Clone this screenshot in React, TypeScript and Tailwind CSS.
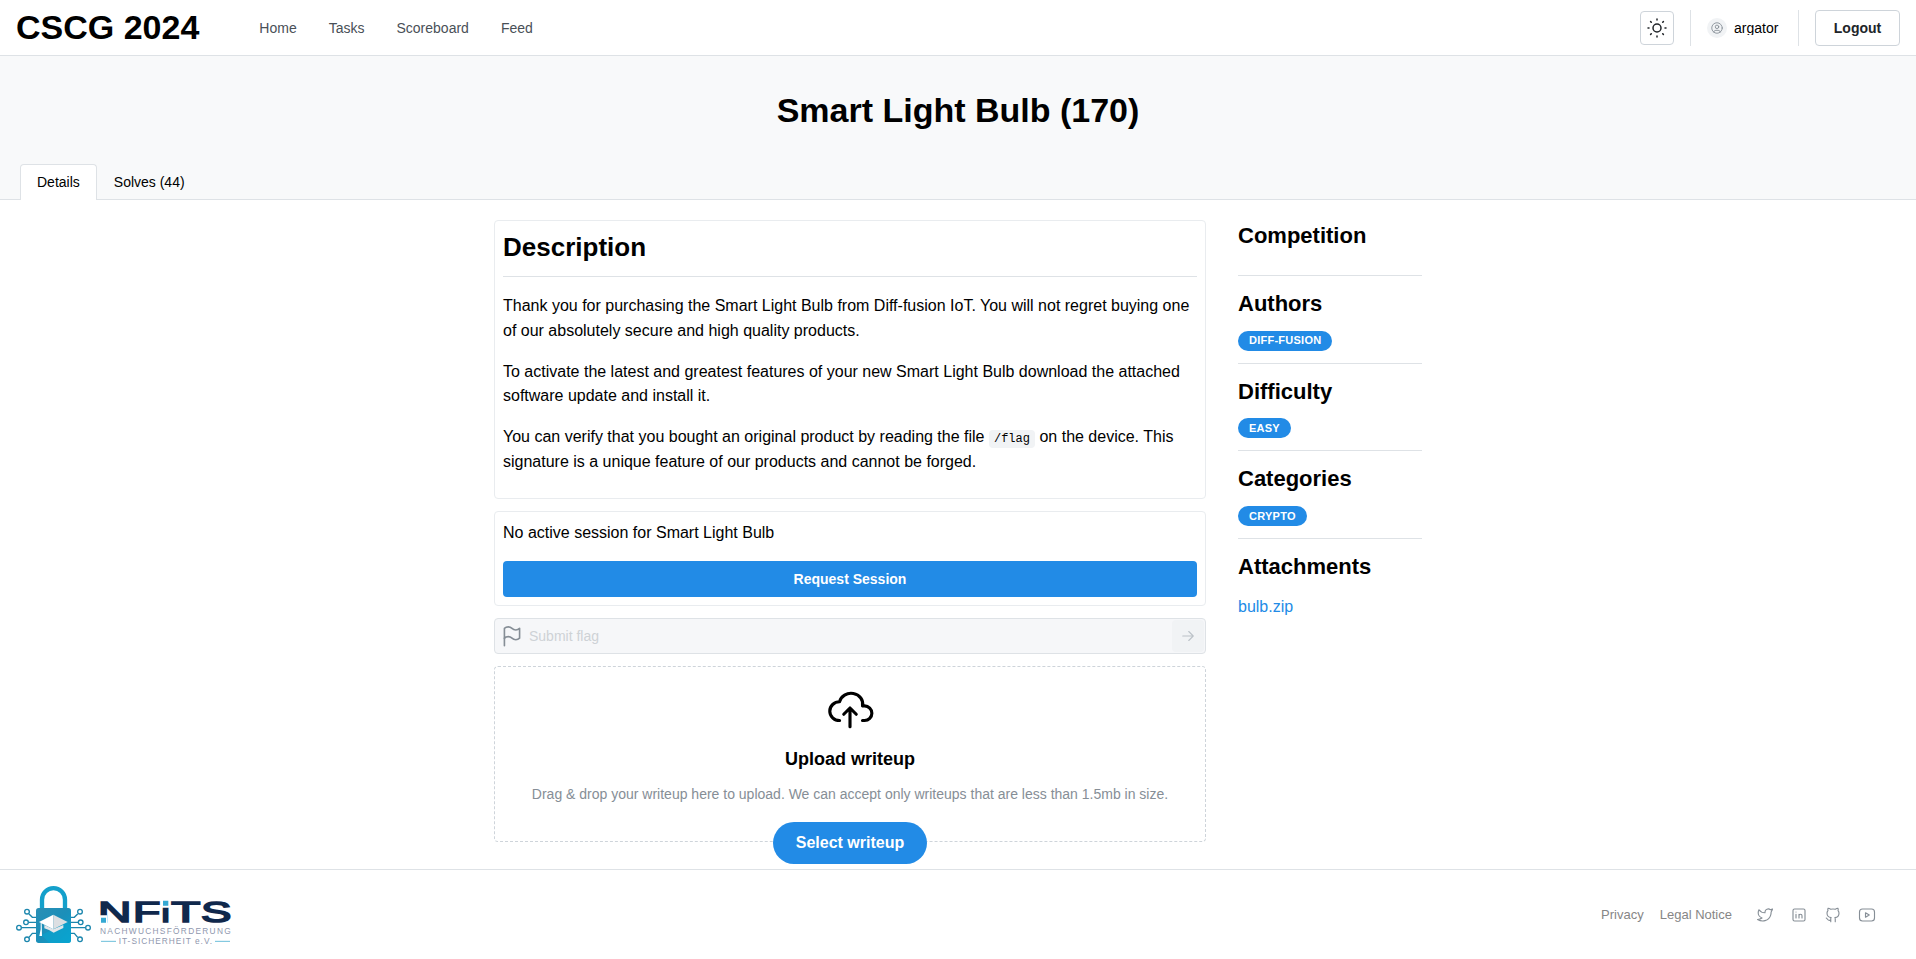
import type { ReactNode } from "react";

type IconProps = { size?: number; className?: string; children: ReactNode };

function Icon({ size = 24, className = "", children }: IconProps) {
  return (
    <svg
      width={size}
      height={size}
      viewBox="0 0 24 24"
      fill="none"
      stroke="currentColor"
      strokeWidth="1.5"
      strokeLinecap="round"
      strokeLinejoin="round"
      className={`shrink-0 ${className}`}
    >
      {children}
    </svg>
  );
}

const LOGO_FONT = "Liberation Sans, Arial, sans-serif";

function NfitsLogo() {
  return (
    <svg width="234" height="65" viewBox="36 51 702 195" fontFamily={LOGO_FONT}>
      <defs>
        <linearGradient id="body" x1="0" y1="0" x2="1" y2="1">
          <stop offset="0" stopColor="#2a8fb5" />
          <stop offset="0.5" stopColor="#1b8fb9" />
          <stop offset="1" stopColor="#0aa3cf" />
        </linearGradient>
      </defs>
      <path d="M126 132V104a34.500 34.500 0 0 1 69 0v28" fill="none" stroke="#14a0cb" strokeWidth="13" />
      <g fill="none" stroke="#1b86ad" strokeWidth="4">
        <path d="M87 147l10 10h12M86 172h22M65 188h43M87 217l10-12h12" />
        <path d="M233 147l-10 10h-12M234 172h-22M256 188h-43M233 217l-10-12h-12" />
        <g fill="#fff">
          <circle cx="81" cy="140" r="7" />
          <circle cx="78" cy="172" r="7" />
          <circle cx="57" cy="188" r="7" />
          <circle cx="81" cy="223" r="7" />
          <circle cx="240" cy="140" r="7" />
          <circle cx="242" cy="172" r="7" />
          <circle cx="264" cy="188" r="7" />
          <circle cx="240" cy="223" r="7" />
        </g>
      </g>
      <rect x="108" y="129" width="105" height="105" rx="8" fill="url(#body)" />
      <path d="M124 210l79-40 10 12v44q0 8-8 8h-57z" fill="#08a5d0" opacity="0.6" />
      <path d="M133 180l27 13 30-13v9q-13 6-29 14-14-9-28-13z" fill="#e3e6e9" />
      <path d="M117 171l43-22v44z" fill="#fff" />
      <path d="M160 149l43 22-43 22z" fill="#dcdfe2" />
      <path d="M122 173v20l-4 20h8l-1-40z" fill="#fff" />
      <g fill="#10284c" stroke="#10284c" strokeWidth="5" fontSize="90">
        <text x="294" y="171" textLength="100" lengthAdjust="spacingAndGlyphs">N</text>
        <text x="399" y="171" textLength="82" lengthAdjust="spacingAndGlyphs">F</text>
        <text x="481" y="171" textLength="32" lengthAdjust="spacingAndGlyphs">I</text>
        <text x="514" y="171" textLength="87" lengthAdjust="spacingAndGlyphs">T</text>
        <text x="603" y="171" textLength="91" lengthAdjust="spacingAndGlyphs">S</text>
      </g>
      <path d="M298 151h23v26h-23zM485 102h24v26h-24z" fill="#fff" />
      <path d="M303 158h15v15h-15zM489 107h16v15h-16z" fill="#35a9d3" />
      <g fill="#8f97ae" fontSize="25">
        <text x="300" y="208" textLength="392">NACHWUCHSFÖRDERUNG</text>
        <text x="356" y="237" textLength="280">IT-SICHERHEIT e.V.</text>
      </g>
      <path d="M303 229h45M645 229h45" stroke="#6cbfda" strokeWidth="3" />
    </svg>
  );
}

function Header() {
  return (
    <header className="flex h-14 items-center border-b border-[#dee2e6] bg-white px-4">
      <h1 className="pb-0.5 text-[34px] leading-[44px] font-bold">CSCG 2024</h1>
      <nav className="ml-[60px] flex gap-8 text-sm text-[#495057]">
        <a>Home</a>
        <a>Tasks</a>
        <a>Scoreboard</a>
        <a>Feed</a>
      </nav>
      <div className="ml-auto flex items-center gap-4">
        <button className="flex size-[34px] items-center justify-center rounded border border-[#ced4da] text-[#212529]">
          <Icon>
            <circle cx="12" cy="12" r="4" />
            <path d="M3 12h1m8 -9v1m8 8h1m-9 8v1m-6.400 -15.400l.7 .7m12.100 -.7l-.7 .7m0 11.400l.7 .7m-12.100 -.7l-.7 .7" />
          </Icon>
        </button>
        <div className="h-9 w-px bg-[#dee2e6]" />
        <div className="flex items-center gap-[7px]">
          <span className="flex size-5 items-center justify-center rounded-full bg-[#f1f3f5] text-[#868e96]">
            <Icon size={14}>
              <circle cx="12" cy="12" r="9" />
              <circle cx="12" cy="10" r="3" />
              <path d="M6.168 18.849a4 4 0 0 1 3.832 -2.849h4a4 4 0 0 1 3.834 2.855" />
            </Icon>
          </span>
          <span className="w-[48px] overflow-hidden text-sm leading-[14px]">argator</span>
        </div>
        <div className="h-9 w-px bg-[#dee2e6]" />
        <button className="h-9 w-[85px] rounded border border-[#ced4da] text-sm font-bold text-[#212529]">
          Logout
        </button>
      </div>
    </header>
  );
}

function Hero() {
  return (
    <section className="flex h-36 flex-col border-b border-[#dee2e6] bg-[#f8f9fa]">
      <h1 className="mt-8 text-center text-[34px] leading-[44px] font-bold">Smart Light Bulb (170)</h1>
      <div className="-mb-px mt-auto flex h-9 px-5 text-sm">
        <div className="flex items-center rounded-t border border-b-0 border-[#dee2e6] bg-white px-4 pb-px">Details</div>
        <div className="flex items-center px-[17px]">Solves (44)</div>
      </div>
    </section>
  );
}

function Badge({ children }: { children: ReactNode }) {
  return (
    <span className="flex h-5 w-fit items-center rounded-full bg-[#228be6] px-[11px] pb-[0.600px] text-[11px] leading-[18px] font-bold tracking-[0.25px] text-white uppercase">
      {children}
    </span>
  );
}

function SideTitle({ children }: { children: ReactNode }) {
  return <h3 className="mb-[11.700px] text-[22px] leading-[31px] font-bold">{children}</h3>;
}

function SideSection({ title, children }: { title: string; children?: ReactNode }) {
  return (
    <div className="border-b border-[#dee2e6] pb-3">
      <SideTitle>{title}</SideTitle>
      {children}
    </div>
  );
}

export default function App() {
  return (
    <div className="flex h-[959px] flex-col overflow-hidden bg-white font-['Liberation_Sans',Arial,sans-serif] text-base leading-[24.800px] text-black">
      <Header />
      <Hero />
      <main className="mx-auto flex h-[669px] w-[928px] shrink-0 gap-8 pt-5">
        <div className="flex w-[712px] flex-col gap-3">
          <article className="h-[279px] rounded border border-[#e9ecef] px-2 pt-[9px]">
            <h2 className="text-[26px] leading-[35px] font-bold">Description</h2>
            <hr className="mt-[11px] mb-[17px] border-[#dee2e6]" />
            <p className="mb-4">
              Thank you for purchasing the Smart Light Bulb from Diff-fusion IoT. You will not regret buying one of our
              absolutely secure and high quality products.
            </p>
            <p className="mb-4">
              To activate the latest and greatest features of your new Smart Light Bulb download the attached software
              update and install it.
            </p>
            <p>
              You can verify that you bought an original product by reading the file{" "}
              <code className="rounded bg-[#f1f3f5] px-[5px] py-0.5 font-['Liberation_Mono',monospace] text-xs">/flag</code>{" "}
              on the device. This signature is a unique feature of our products and cannot be forged.
            </p>
          </article>

          <section className="h-[95px] rounded border border-[#e9ecef] px-2 pt-[9px]">
            <p>No active session for Smart Light Bulb</p>
            <button className="mt-[15px] h-9 w-full rounded bg-[#228be6] text-sm font-bold text-white">
              Request Session
            </button>
          </section>

          <div className="flex h-9 items-center rounded border border-[#dee2e6] bg-[#f6f7f9] pr-px">
            <span className="flex w-[34px] justify-center text-[#868e96]">
              <Icon size={26}>
                <path d="M5 5a5 5 0 0 1 7 0a5 5 0 0 0 7 0v9a5 5 0 0 1 -7 0a5 5 0 0 0 -7 0v-9z" />
                <path d="M5 21v-7" />
              </Icon>
            </span>
            <span className="flex-1 text-sm text-[#ced2d6]">Submit flag</span>
            <button className="flex size-8 items-center justify-center rounded bg-[#f1f3f5] text-[#bcc2c8]">
              <Icon size={18}>
                <path d="M5 12h14M13 18l6 -6M13 6l6 6" />
              </Icon>
            </button>
          </div>

          <section className="relative flex h-[176px] flex-col items-center rounded border border-dashed border-[#ced4da] pt-4">
            <Icon size={50}>
              <path d="M7 18a4.600 4.400 0 0 1 0 -9a5 4.500 0 0 1 11 2h1a3.500 3.500 0 0 1 0 7h-1" />
              <path d="M9 15l3 -3l3 3M12 12v9" />
            </Icon>
            <h4 className="mt-3 text-lg leading-[28px] font-bold">Upload writeup</h4>
            <p className="mt-2.5 text-sm leading-[22px] text-[#868e96]">
              Drag &amp; drop your writeup here to upload. We can accept only writeups that are less than 1.5mb in size.
            </p>
            <button className="absolute top-[155px] h-[42px] w-[154px] rounded-full bg-[#228be6] text-base font-bold text-white">
              Select writeup
            </button>
          </section>
        </div>

        <aside className="flex w-[184px] flex-col gap-3 pt-[0.400px]">
          <SideSection title="Competition" />
          <SideSection title="Authors">
            <Badge>Diff-fusion</Badge>
          </SideSection>
          <SideSection title="Difficulty">
            <Badge>Easy</Badge>
          </SideSection>
          <SideSection title="Categories">
            <Badge>Crypto</Badge>
          </SideSection>
          <div>
            <SideTitle>Attachments</SideTitle>
            <a className="block pt-[0.800px] text-[#228be6]">bulb.zip</a>
          </div>
        </aside>
      </main>

      <footer className="flex h-[90px] items-center border-t border-[#dee2e6] pr-8 pl-3">
        <NfitsLogo />
        <div className="ml-auto flex items-center gap-4 pt-0.5 text-[13px] text-[#868686]">
          <a>Privacy</a>
          <a>Legal Notice</a>
          <div className="flex gap-4 pr-2 pl-2 text-[#868e96]">
            <Icon size={18}>
              <path d="M22 4.010c-1 .49 -1.980 .689 -3 .99c-1.121 -1.265 -2.783 -1.335 -4.380 -.737s-2.643 2.060 -2.620 3.737v1c-3.245 .083 -6.135 -1.395 -8 -4c0 0 -4.182 7.433 4 11c-1.872 1.247 -3.739 2.088 -6 2c3.308 1.803 6.913 2.423 10.034 1.517c3.580 -1.040 6.522 -3.723 7.651 -7.742a13.840 13.840 0 0 0 .497 -3.753c0 -.249 1.510 -2.772 1.818 -4.013z" />
            </Icon>
            <Icon size={18}>
              <rect x="4" y="4" width="16" height="16" rx="2" />
              <path d="M8 11v5M8 8v.01M12 16v-5M16 16v-3a2 2 0 0 0 -4 0" />
            </Icon>
            <Icon size={18}>
              <path d="M9 19c-4.300 1.400 -4.300 -2.500 -6 -3m12 5v-3.500c0 -1 .1 -1.400 -.5 -2c2.800 -.3 5.500 -1.400 5.500 -6a4.600 4.600 0 0 0 -1.300 -3.200a4.200 4.200 0 0 0 -.1 -3.200s-1.100 -.3 -3.500 1.300a12.300 12.300 0 0 0 -6.200 0c-2.400 -1.600 -3.500 -1.300 -3.500 -1.300a4.200 4.200 0 0 0 -.1 3.200a4.600 4.600 0 0 0 -1.300 3.200c0 4.600 2.700 5.700 5.500 6c-.6 .6 -.6 1.200 -.5 2v3.500" />
            </Icon>
            <Icon size={18}>
              <path d="M2 8a4 4 0 0 1 4 -4h12a4 4 0 0 1 4 4v8a4 4 0 0 1 -4 4h-12a4 4 0 0 1 -4 -4v-8z" />
              <path d="M10 9l5 3l-5 3z" />
            </Icon>
          </div>
        </div>
      </footer>
    </div>
  );
}
